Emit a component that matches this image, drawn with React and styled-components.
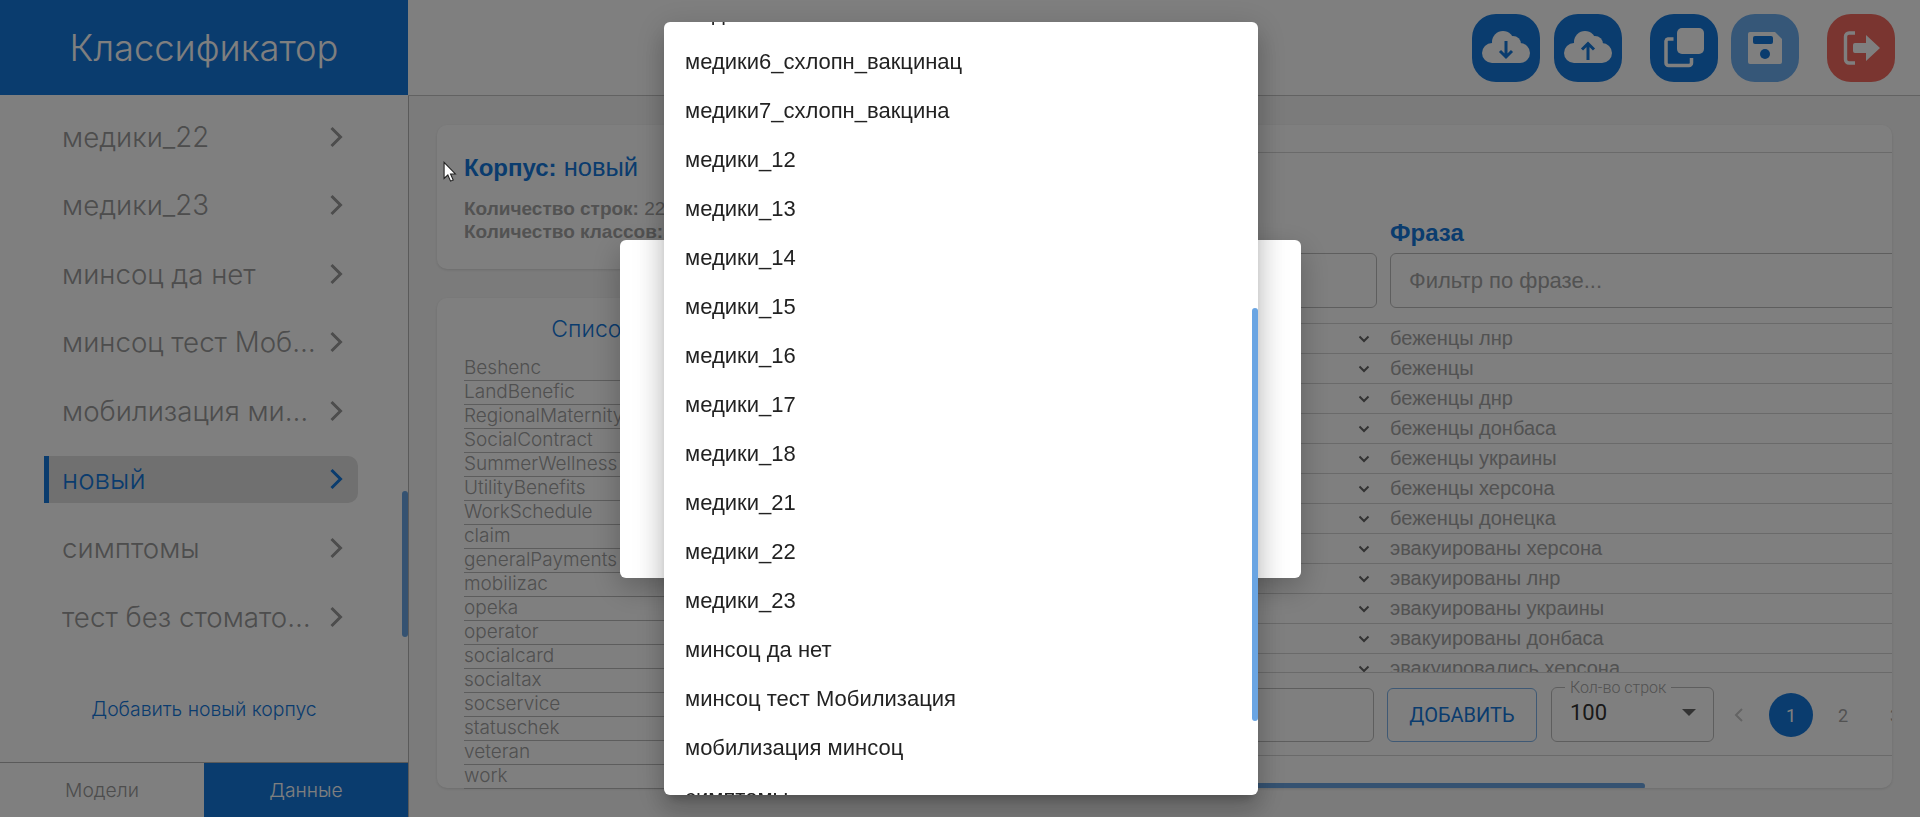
import React from 'react';
import styled, { createGlobalStyle } from 'styled-components';

const Global = createGlobalStyle`
  html, body { margin: 0; padding: 0; height: 100%; overflow: hidden; background: #f7f7f7; }
  * { box-sizing: border-box; }
  body { font-family: Inter, Roboto, "Liberation Sans", sans-serif; }
`;

const BLUE = '#1478dc';
const ARIAL = '"Liberation Sans", Arial, sans-serif';

const Page = styled.div`
  display: grid;
  grid-template-columns: 408px 1fr;
  height: 817px;
  overflow: hidden;
`;

const Sidebar = styled.aside`
  display: flex;
  flex-direction: column;
  background: #fff;
  box-shadow: 1px 0 0 #b5b5b5;
  height: 817px;
`;

const Brand = styled.div`
  height: 95px;
  flex: none;
  background: ${BLUE};
  color: #fff;
  font-size: 36.3px;
  font-weight: 300;
  display: flex;
  align-items: center;
  justify-content: center;
`;

const CorpusList = styled.div`
  position: relative;
  flex: 1;
  padding: 18px 0 0 44px;
  display: flex;
  flex-direction: column;
  gap: 21.6px;
`;

const CorpusItem = styled.div`
  width: 314px;
  height: 47px;
  flex: none;
  display: flex;
  align-items: center;
  justify-content: space-between;
  padding: 0 15px 0 ${p => (p.$active ? '13px' : '18px')};
  font-size: 27.7px;
  font-weight: 300;
  color: ${p => (p.$active ? BLUE : '#9a9a9a')};
  background: ${p => (p.$active ? '#e0e0e0' : 'transparent')};
  border-left: ${p => (p.$active ? `5px solid ${BLUE}` : '0')};
  border-radius: ${p => (p.$active ? '0 10px 10px 0' : '0')};
`;

const CorpusName = styled.span`
  width: 255px;
  white-space: nowrap;
  overflow: hidden;
  text-overflow: ellipsis;
`;

const SideThumb = styled.div`
  position: absolute;
  right: 0;
  top: 396px;
  width: 6px;
  height: 146px;
  border-radius: 3px;
  background: #6aa5e3;
`;

const AddLink = styled.div`
  flex: none;
  height: 72px;
  display: flex;
  align-items: flex-start;
  justify-content: center;
  color: ${BLUE};
  font-size: 19.4px;
  font-weight: 300;
  padding-top: 7px;
`;

const Tabs = styled.div`
  flex: none;
  height: 55px;
  display: grid;
  grid-template-columns: 1fr 1fr;
  border-top: 1px solid #b5b5b5;
`;

const Tab = styled.div`
  display: flex;
  align-items: center;
  justify-content: center;
  font-size: 19.3px;
  font-weight: 300;
  color: ${p => (p.$active ? '#fff' : '#9a9a9a')};
  background: ${p => (p.$active ? BLUE : 'transparent')};
`;

const Main = styled.main`
  display: flex;
  flex-direction: column;
  min-width: 0;
`;

const TopBar = styled.header`
  height: 96px;
  flex: none;
  background: #fff;
  border-bottom: 1px solid #c4c4c4;
  display: flex;
  justify-content: flex-end;
  align-items: flex-start;
  padding: 14px 25px 0 0;
`;

const IconBtn = styled.div`
  width: 68px;
  height: 68px;
  border-radius: 24px;
  margin-left: ${p => p.$gap}px;
  display: flex;
  align-items: center;
  justify-content: center;
  background: ${p => p.$bg};
`;

const Content = styled.div`
  flex: 1;
  display: grid;
  grid-template-columns: 380px 1047px;
  gap: 28px;
  padding: 29px 0 0 29px;
`;

const LeftCol = styled.div`
  display: flex;
  flex-direction: column;
  gap: 29px;
`;

const Card = styled.section`
  background: #fff;
  border-radius: 10px;
  box-shadow: 0 1px 3px rgba(0,0,0,.12);
`;

const InfoCard = styled(Card)`
  height: 144px;
  padding: 27px 27px 0;
`;

const CorpusTitle = styled.div`
  font-family: ${ARIAL};
  font-size: 25.5px;
  color: ${BLUE};
  line-height: 30px;
  b { font-weight: 700; font-size: 24px; }
`;

const InfoLine = styled.div`
  font-family: ${ARIAL};
  font-size: 19px;
  font-weight: 700;
  color: #a4a4a4;
  line-height: 23px;
  white-space: nowrap;
  span { font-weight: 400; }
`;

const InfoLines = styled.div`
  margin-top: 14px;
`;

const ClassCard = styled(Card)`
  height: 490px;
  padding: 19px 0 0 27px;
`;

const ClassTitle = styled.div`
  font-size: 23px;
  font-weight: 300;
  color: ${BLUE};
  text-align: center;
  line-height: 24px;
  margin-bottom: 16px;
`;

const ClassRow = styled.div`
  height: 24px;
  font-size: 19px;
  font-weight: 300;
  color: #a0a0a0;
  line-height: 22px;
  border-bottom: 1px solid #bbb;
  white-space: nowrap;
`;

const TableCard = styled(Card)`
  height: 663px;
  overflow: hidden;
  display: flex;
  flex-direction: column;
`;

const CardTop = styled.div`
  height: 28px;
  flex: none;
  border-bottom: 1px solid #d4d4d4;
`;

const FilterGrid = styled.div`
  flex: none;
  display: grid;
  grid-template-columns: 520px 620px;
  gap: 13px;
  padding: 66px 0 0 12px;
  height: 170px;
`;

const FilterHead = styled.div`
  font-family: ${ARIAL};
  font-size: 24px;
  font-weight: 700;
  color: ${BLUE};
  line-height: 27px;
  margin-bottom: 7px;
`;

const FilterInput = styled.div`
  height: 55px;
  border: 1px solid #bdbdbd;
  border-radius: 6px;
  display: flex;
  align-items: center;
  padding-left: 18px;
  font-family: ${ARIAL};
  font-size: 22px;
  color: #a4a4a4;
`;

const Rows = styled.div`
  height: 349px;
  flex: none;
  overflow: hidden;
  border-top: 1px solid #d4d4d4;
`;

const Row = styled.div`
  height: 30px;
  display: grid;
  grid-template-columns: 520px 620px;
  gap: 13px;
  padding-left: 12px;
  align-items: center;
  border-bottom: 1px solid #d4d4d4;
  font-family: ${ARIAL};
  font-size: 20px;
  color: #a4a4a4;
`;

const RowClass = styled.div`
  display: flex;
  justify-content: space-between;
  align-items: center;
  padding-right: 7px;
`;

const Toolbar = styled.div`
  flex: none;
  height: 84px;
  display: flex;
  align-items: flex-start;
  padding: 15px 0 0 12px;
  border-top: 1px solid #d4d4d4;
  border-bottom: 1px solid #d4d4d4;
`;

const AddInput = styled.div`
  width: 517px;
  flex: none;
  height: 54px;
  border: 1px solid #bdbdbd;
  border-radius: 6px;
`;

const AddButton = styled.div`
  width: 150px;
  flex: none;
  height: 54px;
  margin-left: 13px;
  border: 1px solid #7eb3ea;
  border-radius: 6px;
  display: flex;
  align-items: center;
  justify-content: center;
  font-family: Roboto, sans-serif;
  font-size: 20px;
  color: ${BLUE};
`;

const SelectBox = styled.fieldset`
  width: 163px;
  flex: none;
  height: 62px;
  margin: -8px 0 0 14px;
  padding: 0 18px;
  border: 1px solid #bdbdbd;
  border-radius: 6px;
  min-width: 0;
  legend {
    padding: 0 5px;
    margin-left: -5px;
    font-family: Roboto, sans-serif;
    font-size: 16px;
    font-weight: 300;
    color: #a4a4a4;
    line-height: 15px;
  }
`;

const SelectValue = styled.div`
  display: flex;
  justify-content: space-between;
  align-items: center;
  font-family: Roboto, sans-serif;
  font-size: 22px;
  color: #333;
  height: 42px;
  margin-top: -4px;
`;

const Caret = styled.i`
  width: 0;
  height: 0;
  border-left: 7px solid transparent;
  border-right: 7px solid transparent;
  border-top: 7px solid #666;
  margin-right: -1px;
`;

const Pager = styled.div`
  display: flex;
  align-items: center;
  height: 54px;
  margin-left: 3px;
  flex: none;
`;

const PageBtn = styled.div`
  width: 44px;
  height: 44px;
  margin-right: 8px;
  border-radius: 50%;
  flex: none;
  display: flex;
  align-items: center;
  justify-content: center;
  font-family: Roboto, sans-serif;
  font-size: 18px;
  color: ${p => (p.$active ? '#fff' : '#a4a4a4')};
  background: ${p => (p.$active ? BLUE : 'transparent')};
`;

const HScroll = styled.div`
  flex: 1;
  display: flex;
  align-items: flex-end;
  justify-content: flex-end;
  padding-right: 247px;
`;

const HThumb = styled.div`
  width: 600px;
  height: 6px;
  border-radius: 3px;
  background: #6aa5e3;
  margin-bottom: -1px;
`;

const Backdrop = styled.div`
  position: fixed;
  inset: 0;
  background: rgba(0,0,0,.5);
`;

const Layer = styled.div`
  position: fixed;
  inset: 0;
  display: flex;
  align-items: center;
  justify-content: center;
  padding-left: ${p => p.$shift || 0}px;
`;

const Modal = styled.div`
  width: 681px;
  height: 338px;
  background: #fff;
  border-radius: 6px;
  box-shadow: 0 10px 30px rgba(0,0,0,.25);
`;

const Menu = styled.div`
  position: relative;
  width: 594px;
  height: 773px;
  background: #fff;
  border-radius: 6px;
  overflow: hidden;
  box-shadow: 0 8px 10px -5px rgba(0,0,0,.2), 0 16px 24px 2px rgba(0,0,0,.14), 0 6px 30px 5px rgba(0,0,0,.12);
`;

const MenuItems = styled.div`
  margin-top: -34px;
`;

const MenuItem = styled.div`
  height: 49.07px;
  display: flex;
  align-items: center;
  padding-left: 21px;
  font-family: ${ARIAL};
  font-size: 22px;
  color: #222;
`;

const MenuThumb = styled.div`
  position: absolute;
  right: 0;
  top: 286px;
  width: 6px;
  height: 413px;
  border-radius: 3px;
  background: #6aa5e3;
`;

const Cursor = styled.svg`
  position: fixed;
  left: 443px;
  top: 161px;
`;

const Chevron = ({ color = '#9a9a9a' }) => (
  <svg width="14" height="22" viewBox="0 0 14 22" fill="none" stroke={color} strokeWidth="3">
    <path d="M2.5 2 L11.5 11 L2.5 20" />
  </svg>
);

const SmallChevron = () => (
  <svg width="12" height="8" viewBox="0 0 12 8" fill="none" stroke="#666" strokeWidth="2">
    <path d="M1.5 1.5 L6 6 L10.5 1.5" />
  </svg>
);

const Cloud = ({ up }) => (
  <svg width="48" height="34" viewBox="0 0 48 34">
    <g fill="#fff">
      <circle cx="10" cy="22" r="10" />
      <circle cx="21" cy="11" r="11" />
      <circle cx="31" cy="13" r="8" />
      <circle cx="38" cy="22" r="10" />
      <rect x="10" y="16" width="28" height="16" />
    </g>
    <path
      d={up ? 'M24 29 V13 M18 18.5 L24 12.5 L30 18.5' : 'M24 10 V26 M18 20 L24 26 L30 20'}
      fill="none"
      stroke={BLUE}
      strokeWidth="3"
    />
  </svg>
);

const CopyIcon = () => (
  <svg width="40" height="40" viewBox="0 0 40 40">
    <path d="M9.5 11 H4 a2.5 2.5 0 0 0 -2 2 V35 a2.5 2.5 0 0 0 2.5 2.5 H25 a2.5 2.5 0 0 0 2.5 -2.5 V30" fill="none" stroke="#fff" strokeWidth="3.5" />
    <rect x="13" y="0" width="27" height="26" rx="5" fill="#fff" />
  </svg>
);

const SaveIcon = () => (
  <svg width="34" height="32" viewBox="0 0 34 32">
    <path d="M2 0 H27 L34 7 V30 a2 2 0 0 1 -2 2 H2 a2 2 0 0 1 -2 -2 V2 a2 2 0 0 1 2 -2 Z" fill="#fff" />
    <rect x="5" y="4" width="20" height="8" rx="2" fill={BLUE} />
    <circle cx="17" cy="22" r="5" fill={BLUE} />
  </svg>
);

const ExitIcon = () => (
  <svg width="38" height="34" viewBox="0 0 38 34">
    <path d="M13 2 H7 a3.5 3.5 0 0 0 -3.5 3.5 V28.5 a3.5 3.5 0 0 0 3.5 3.5 H13" fill="none" stroke="#fff" strokeWidth="3.4" />
    <path d="M13 12 H24 V4 L38 17 L24 30 V22 H13 a2 2 0 0 1 -2 -2 V14 a2 2 0 0 1 2 -2 Z" fill="#fff" />
  </svg>
);

const corpora = ['медики_22', 'медики_23', 'минсоц да нет', 'минсоц тест Мобилизация', 'мобилизация минсоц', 'новый', 'симптомы', 'тест без стоматологии'];
const classes = ['Beshenc', 'LandBenefic', 'RegionalMaternity', 'SocialContract', 'SummerWellness', 'UtilityBenefits', 'WorkSchedule', 'claim', 'generalPayments', 'mobilizac', 'opeka', 'operator', 'socialcard', 'socialtax', 'socservice', 'statuschek', 'veteran', 'work'];
const phrases = ['беженцы лнр', 'беженцы', 'беженцы днр', 'беженцы донбаса', 'беженцы украины', 'беженцы херсона', 'беженцы донецка', 'эвакуированы херсона', 'эвакуированы лнр', 'эвакуированы украины', 'эвакуированы донбаса', 'эвакуировались херсона'];
const menu = ['медики5', 'медики6_схлопн_вакцинац', 'медики7_схлопн_вакцина', 'медики_12', 'медики_13', 'медики_14', 'медики_15', 'медики_16', 'медики_17', 'медики_18', 'медики_21', 'медики_22', 'медики_23', 'минсоц да нет', 'минсоц тест Мобилизация', 'мобилизация минсоц', 'симптомы'];

export default function App() {
  return (
    <>
      <Global />
      <Page>
        <Sidebar>
          <Brand>Классификатор</Brand>
          <CorpusList>
            {corpora.map(c => (
              <CorpusItem key={c} $active={c === 'новый'}>
                <CorpusName>{c}</CorpusName>
                <Chevron color={c === 'новый' ? BLUE : '#9a9a9a'} />
              </CorpusItem>
            ))}
            <SideThumb />
          </CorpusList>
          <AddLink>Добавить новый корпус</AddLink>
          <Tabs>
            <Tab>Модели</Tab>
            <Tab $active>Данные</Tab>
          </Tabs>
        </Sidebar>
        <Main>
          <TopBar>
            <IconBtn $bg={BLUE} $gap={0}><Cloud /></IconBtn>
            <IconBtn $bg={BLUE} $gap={14}><Cloud up /></IconBtn>
            <IconBtn $bg={BLUE} $gap={28}><CopyIcon /></IconBtn>
            <IconBtn $bg="#6caef0" $gap={13}><SaveIcon /></IconBtn>
            <IconBtn $bg="#f46a60" $gap={28}><ExitIcon /></IconBtn>
          </TopBar>
          <Content>
            <LeftCol>
              <InfoCard>
                <CorpusTitle><b>Корпус:</b> новый</CorpusTitle>
                <InfoLines>
                  <InfoLine>Количество строк: <span>2200</span></InfoLine>
                  <InfoLine>Количество классов: <span>18</span></InfoLine>
                </InfoLines>
              </InfoCard>
              <ClassCard>
                <ClassTitle>Список классов</ClassTitle>
                {classes.map(c => <ClassRow key={c}>{c}</ClassRow>)}
              </ClassCard>
            </LeftCol>
            <TableCard>
              <CardTop />
              <FilterGrid>
                <div>
                  <FilterHead>Класс</FilterHead>
                  <FilterInput>Фильтр по классу...</FilterInput>
                </div>
                <div>
                  <FilterHead>Фраза</FilterHead>
                  <FilterInput>Фильтр по фразе...</FilterInput>
                </div>
              </FilterGrid>
              <Rows>
                {phrases.map(p => (
                  <Row key={p}>
                    <RowClass><span>Beshenc</span><SmallChevron /></RowClass>
                    <div>{p}</div>
                  </Row>
                ))}
              </Rows>
              <Toolbar>
                <AddInput />
                <AddButton>ДОБАВИТЬ</AddButton>
                <SelectBox>
                  <legend>Кол-во строк</legend>
                  <SelectValue>100<Caret /></SelectValue>
                </SelectBox>
                <Pager>
                  <PageBtn>
                    <svg width="10" height="16" viewBox="0 0 10 16" fill="none" stroke="#c8c8c8" strokeWidth="2"><path d="M8 2 L2 8 L8 14" /></svg>
                  </PageBtn>
                  <PageBtn $active>1</PageBtn>
                  <PageBtn>2</PageBtn>
                  <PageBtn>3</PageBtn>
                </Pager>
              </Toolbar>
              <HScroll><HThumb /></HScroll>
            </TableCard>
          </Content>
        </Main>
      </Page>
      <Backdrop />
      <Layer><Modal /></Layer>
      <Layer $shift={2}>
        <Menu>
          <MenuItems>
            {menu.map(m => <MenuItem key={m}>{m}</MenuItem>)}
          </MenuItems>
          <MenuThumb />
        </Menu>
      </Layer>
      <Cursor width="14" height="22" viewBox="0 0 13 20">
        <path d="M1 1 V16 L4.5 12.8 L7 18.5 L9.5 17.4 L7 11.8 H11.5 Z" fill="#fff" stroke="#222" strokeWidth="1" />
      </Cursor>
    </>
  );
}
